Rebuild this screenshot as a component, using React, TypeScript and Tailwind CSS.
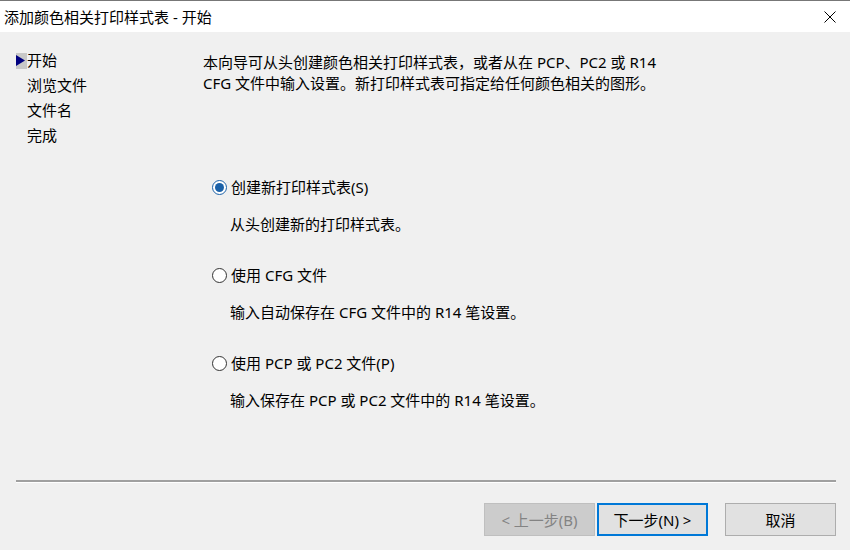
import React, { useState } from "react";

const FONT = "font-['Noto_Sans','Noto_Sans_CJK_SC',sans-serif]";

interface Option {
  key: string;
  label: string;
  desc: string;
}

const OPTIONS: Option[] = [
  { key: "new", label: "创建新打印样式表(S)", desc: "从头创建新的打印样式表。" },
  { key: "cfg", label: "使用 CFG 文件", desc: "输入自动保存在 CFG 文件中的 R14 笔设置。" },
  { key: "pcp", label: "使用 PCP 或 PC2 文件(P)", desc: "输入保存在 PCP 或 PC2 文件中的 R14 笔设置。" },
];

const STEPS = ["开始", "浏览文件", "文件名", "完成"];

const Radio: React.FC<{ checked: boolean }> = ({ checked }) => (
  <span
    className={`flex items-center justify-center w-[15px] h-[15px] rounded-full border bg-white ${
      checked ? "border-[#1b61a8]" : "border-[#333333]"
    }`}
  >
    {checked && <span className="w-[9px] h-[9px] rounded-full bg-[#1b61a8]" />}
  </span>
);

const App: React.FC = () => {
  const [selected, setSelected] = useState<string>("new");

  return (
    <div className={`w-[850px] h-[550px] bg-[#f0f0f0] border-t border-[#777777] text-[15px] text-black ${FONT}`}>
      {/* title bar */}
      <div className="h-[31px] bg-white flex items-center justify-between pl-[4px] pr-[14px]">
        <span className="leading-[20px]">添加颜色相关打印样式表 - 开始</span>
        <svg width="12" height="12" viewBox="0 0 12 12">
          <path d="M0.5 0.5 L11.5 11.5 M11.5 0.5 L0.5 11.5" stroke="#000" strokeWidth="1" />
        </svg>
      </div>

      <div className="flex h-[448px]">
        {/* steps */}
        <div className="w-[203px] pt-[16px] pl-[16px]">
          {STEPS.map((s, i) => (
            <div key={s} className="flex items-center h-[25px] leading-[25px]">
              <span className={`w-[11px] h-[16px] flex items-center ${i === 0 ? "bg-[#c8c8c8]" : ""}`}>
                {i === 0 && (
                  <svg width="9" height="11" viewBox="0 0 9 11">
                    <path d="M0 0 L9 5.5 L0 11 Z" fill="#000080" />
                  </svg>
                )}
              </span>
              <span>{s}</span>
            </div>
          ))}
        </div>

        {/* content */}
        <div className="flex-1 pt-[20px]">
          <p className="leading-[21px]">
            本向导可从头创建颜色相关打印样式表，或者从在 PCP、PC2 或 R14
            <br />
            CFG 文件中输入设置。新打印样式表可指定给任何颜色相关的图形。
          </p>
          <div className="mt-[82px] pl-[9px] flex flex-col gap-[29px]">
            {OPTIONS.map((o) => (
              <div key={o.key}>
                <label
                  className="flex items-center gap-[4px] h-[22px] leading-[22px] cursor-default"
                  onClick={() => setSelected(o.key)}
                >
                  <Radio checked={selected === o.key} />
                  <span>{o.label}</span>
                </label>
                <div className="mt-[15px] h-[22px] leading-[22px] pl-[18px]">{o.desc}</div>
              </div>
            ))}
          </div>
        </div>
      </div>

      {/* separator */}
      <div className="ml-[16px] mr-[14px]">
        <div className="h-[2px] bg-[#a0a0a0]" />
        <div className="h-[1px] bg-white" />
      </div>

      {/* buttons */}
      <div className="flex justify-end pr-[14px] mt-[20px]">
        <button
          disabled
          className="w-[111px] h-[33px] bg-[#cccccc] border border-[#bfbfbf] text-[#838383] leading-[20px]"
        >
          &lt; 上一步(B)
        </button>
        <button className="ml-[2px] w-[111px] h-[33px] bg-[#e1e1e1] border-2 border-[#0078d7] leading-[20px]">
          下一步(N) &gt;
        </button>
        <button className="ml-[17px] w-[111px] h-[33px] bg-[#e1e1e1] border border-[#adadad] leading-[20px]">
          取消
        </button>
      </div>
    </div>
  );
};

export default App;
